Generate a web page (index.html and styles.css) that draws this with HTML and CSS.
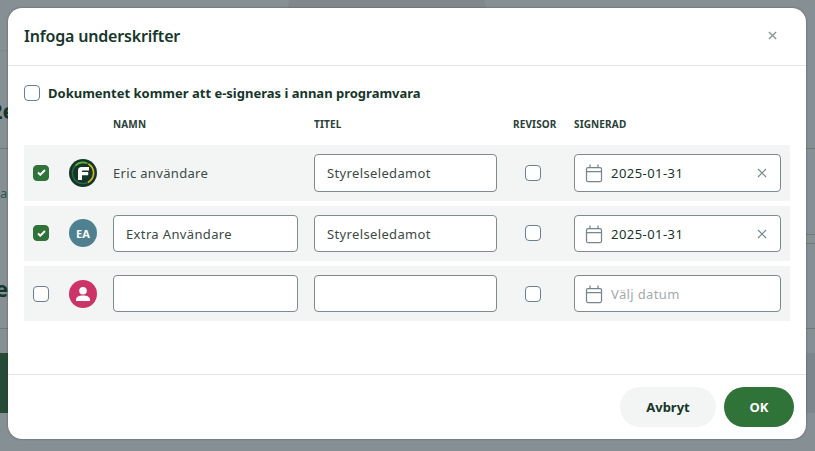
FILE: index.html
```html
<!DOCTYPE html>
<html lang="sv">
<head>
<meta charset="utf-8">
<title>Infoga underskrifter</title>
<link rel="stylesheet" href="styles.css">
</head>
<body>
<div class="backdrop">
  <span class="bg-tab"></span>
  <span class="bg-band"></span>
  <span class="bg-line bg-l1"></span>
  <span class="bg-line bg-l2"></span>
  <span class="bg-line bg-l3"></span>
  <span class="bg-line bg-l4"></span>
  <span class="bg-line bg-l5"></span>
  <span class="bg-line bg-l6"></span>
  <span class="bg-line bg-l7"></span>
  <span class="bg-text bg-t1">2e</span>
  <span class="bg-text bg-t2">e</span>
  <span class="bg-small">a</span>
  <span class="bg-block"></span>
</div>
<main class="modal">
  <header class="modal-head">
    <h1 class="modal-title">Infoga underskrifter</h1>
    <svg class="close" viewBox="0 0 10 10"><path d="M1 1l8 8M9 1l-8 8"/></svg>
  </header>
  <section class="modal-body">
    <label class="external">
      <span class="box"></span>
      <span>Dokumentet kommer att e-signeras i annan programvara</span>
    </label>
    <div class="grid head-row">
      <span></span><span></span>
      <span>NAMN</span><span>TITEL</span><span>REVISOR</span><span>SIGNERAD</span>
    </div>
    <div class="grid row">
      <span class="box checked"><svg viewBox="0 0 10 8" width="9" height="7"><path d="M1 4l2.6 2.6L9 1.2"/></svg></span>
      <svg class="avatar" viewBox="0 0 28 28" width="28" height="28">
        <circle cx="14" cy="14" r="14" fill="#16362a"/>
        <circle cx="14" cy="14" r="10.6" fill="none" stroke="#2b6a3a" stroke-width="1.3"/>
        <path d="M6.5 6.5A10.6 10.6 0 0 1 18 4.2" fill="none" stroke="#62b52e" stroke-width="1.7"/>
        <path d="M19.5 5A10.6 10.6 0 0 1 19 23.4" fill="none" stroke="#d8b21e" stroke-width="1.7"/>
        <path d="M9 21V11.5Q9 8 12.5 8H20V11.4H13.6Q13 11.4 13 12V13H19.2V16.2H13V21Z" fill="#fff"/>
      </svg>
      <span class="name">Eric användare</span>
      <span class="field">Styrelseledamot</span>
      <span class="box revisor"></span>
      <span class="field date">
        <svg class="cal" viewBox="0 0 18 20" width="18" height="20"><rect x="1.5" y="4.5" width="15" height="14" rx="1.5"/><path d="M1.5 8.5h15M5 1.5v3M13 1.5v3"/></svg>
        <span class="date-text">2025-01-31</span>
        <svg class="clear" viewBox="0 0 10 10" width="10" height="10"><path d="M1 1l8 8M9 1l-8 8"/></svg>
      </span>
    </div>
    <div class="grid row">
      <span class="box checked"><svg viewBox="0 0 10 8" width="9" height="7"><path d="M1 4l2.6 2.6L9 1.2"/></svg></span>
      <span class="avatar initials">EA</span>
      <span class="field">Extra Användare</span>
      <span class="field">Styrelseledamot</span>
      <span class="box revisor"></span>
      <span class="field date">
        <svg class="cal" viewBox="0 0 18 20" width="18" height="20"><rect x="1.5" y="4.5" width="15" height="14" rx="1.5"/><path d="M1.5 8.5h15M5 1.5v3M13 1.5v3"/></svg>
        <span class="date-text">2025-01-31</span>
        <svg class="clear" viewBox="0 0 10 10" width="10" height="10"><path d="M1 1l8 8M9 1l-8 8"/></svg>
      </span>
    </div>
    <div class="grid row">
      <span class="box"></span>
      <svg class="avatar" viewBox="0 0 28 28" width="28" height="28">
        <circle cx="14" cy="14" r="14" fill="#cc3366"/>
        <circle cx="14" cy="10.8" r="3.8" fill="#fff"/>
        <path d="M7 21v-1.2C7 17 10 15.6 14 15.6s7 1.4 7 4.2V21Z" fill="#fff"/>
      </svg>
      <span class="field"></span>
      <span class="field"></span>
      <span class="box revisor"></span>
      <span class="field date placeholder">
        <svg class="cal" viewBox="0 0 18 20" width="18" height="20"><rect x="1.5" y="4.5" width="15" height="14" rx="1.5"/><path d="M1.5 8.5h15M5 1.5v3M13 1.5v3"/></svg>
        <span class="date-text">Välj datum</span>
      </span>
    </div>
  </section>
  <footer class="modal-foot">
    <button class="btn btn-cancel">Avbryt</button>
    <button class="btn btn-ok">OK</button>
  </footer>
</main>
</body>
</html>
```
FILE: styles.css
```css
* { box-sizing: border-box; }
html, body { margin: 0; padding: 0; height: 100%; }
body {
  background: #868f94;
  font-family: "Noto Sans", sans-serif;
  color: #16362a;
  overflow: hidden;
  position: relative;
  width: 815px;
  height: 451px;
}
.backdrop { position: absolute; inset: 0; }
.bg-tab { position: absolute; left: 287px; top: 0; width: 200px; height: 8px; background: #7f888d; clip-path: polygon(3px 0, 197px 0, 100% 100%, 0 100%); }
.bg-band { position: absolute; left: 806px; top: 353px; width: 9px; height: 60px; background: #7d868b; }
.bg-line { position: absolute; height: 1px; background: #6f7a75; }
.bg-l1 { left: 0; width: 8px; top: 50px; background: #7f888d; }
.bg-l2 { left: 0; width: 8px; top: 148px; }
.bg-l3 { left: 0; width: 8px; top: 328px; }
.bg-l4 { left: 806px; width: 9px; top: 148px; }
.bg-l5 { left: 806px; width: 9px; top: 234px; }
.bg-l6 { left: 806px; width: 9px; top: 243px; }
.bg-l7 { left: 806px; width: 9px; top: 328px; }
.bg-text { position: absolute; font-size: 22px; font-weight: 700; color: #16362a; line-height: 24px; }
.bg-t1 { top: 98px; left: -10px; }
.bg-t2 { top: 276px; left: -5px; }
.bg-small { position: absolute; left: 0; top: 184px; font-size: 13px; color: #1f5a50; line-height: 18px; }
.bg-block { position: absolute; left: 0; top: 353px; width: 8px; height: 60px; background: #254a36; }

.modal {
  position: absolute;
  left: 8px;
  top: 8px;
  width: 798px;
  height: 431px;
  background: #fff;
  border-radius: 14px;
  box-shadow: 0 0 2px rgba(40, 50, 55, .6);
  display: flex;
  flex-direction: column;
}
.modal-head {
  height: 58px;
  flex: none;
  display: flex;
  align-items: center;
  justify-content: space-between;
  padding: 0 29px 2px 16px;
  border-bottom: 1px solid #e4e6e7;
}
.modal-title { margin: 0; font-size: 16px; font-weight: 600; line-height: 24px; letter-spacing: -.18px; }
.close { fill: none; stroke: #8a9599; stroke-width: 1.5; width: 9px; height: 9px; }

.modal-body { flex: 1; padding: 18px 16px 0; }
.external {
  display: flex;
  align-items: center;
  gap: 8px;
  font-size: 13px;
  font-weight: 700;
  line-height: 18px;
  height: 18px;
}
.box {
  width: 16px;
  height: 16px;
  flex: none;
  border: 1px solid #6b7f8c;
  border-radius: 4px;
  background: #fff;
  display: flex;
  align-items: center;
  justify-content: center;
}
.box.checked { background: #2f7338; border-color: #2f7338; }
.box svg { fill: none; stroke: #fff; stroke-width: 2.2; }
.grid {
  display: grid;
  grid-template-columns: 16px 32px 185px 183px 45px 207px;
  column-gap: 16px;
  align-items: center;
  padding: 0 9px;
}
.head-row {
  font-size: 10px;
  font-weight: 700;
  line-height: 14px;
  margin-top: 15px;
  margin-bottom: 14.3px;
  letter-spacing: .15px;
  color: #2a4038;
}
.row {
  background: #f3f5f5;
  height: 55.33px;
  margin-bottom: 5px;
}
.row .avatar { margin-left: 4px; }
.avatar { width: 28px; height: 28px; display: block; }
.initials {
  border-radius: 50%;
  background: #4f8090;
  color: #fff;
  font-size: 11px;
  font-weight: 700;
  display: flex;
  align-items: center;
  justify-content: center;
}
.name { font-size: 13px; color: #3a4a45; letter-spacing: .33px; }
.field {
  height: 37.5px;
  background: #fff;
  border: 1px solid #7f8a8f;
  border-radius: 4px;
  display: flex;
  align-items: center;
  padding: .6px 12px 0;
  font-size: 13px;
  letter-spacing: .36px;
  color: #3a4a45;
}
.revisor { justify-self: center; margin-left: -5px; }
.date { padding: .6px 13px 0 10px; }
.cal { fill: none; stroke: #75858e; stroke-width: 1.25; flex: none; }
.date-text { margin-left: 8px; flex: 1; color: #16362a; letter-spacing: .45px; }
.placeholder .date-text { color: #a3abad; letter-spacing: .36px; }
.clear { fill: none; stroke: #75858e; stroke-width: 1.1; flex: none; }

.modal-foot {
  height: 65px;
  flex: none;
  border-top: 1px solid #e4e6e7;
  display: flex;
  justify-content: flex-end;
  align-items: flex-start;
  gap: 8px;
  padding: 12px 12px 0 0;
}
.btn {
  height: 40px;
  border: 0;
  border-radius: 20px;
  font-family: inherit;
  font-size: 13px;
  font-weight: 700;
}
.btn-cancel { width: 96px; background: #f3f5f5; color: #16362a; }
.btn-ok { width: 70px; background: #2f7338; color: #fff; }
```
